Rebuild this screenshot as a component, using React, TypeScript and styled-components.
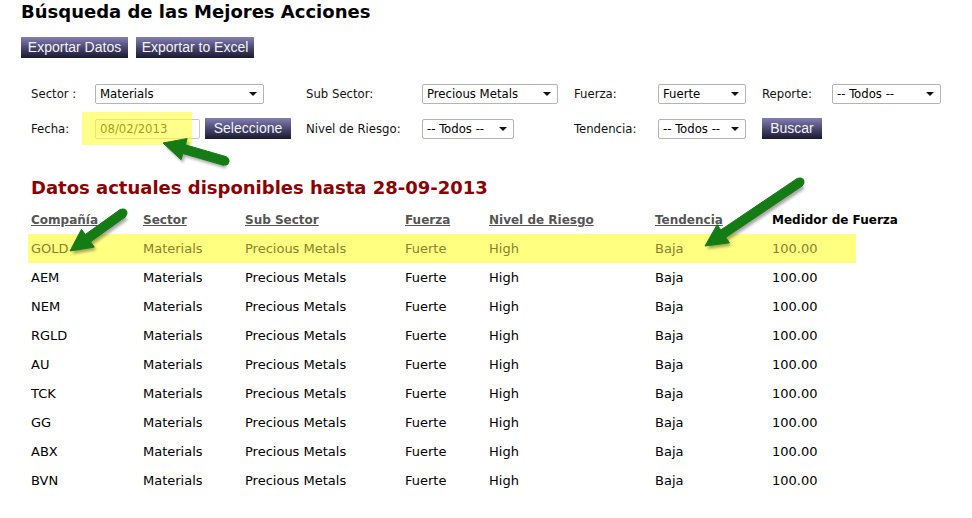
import styled, { createGlobalStyle } from "styled-components";

const GlobalStyle = createGlobalStyle`
  html, body {
    margin: 0;
    padding: 0;
    background: #fff;
  }
  body {
    font-family: "DejaVu Sans", Verdana, sans-serif;
    color: #000;
  }
`;

const Page = styled.div`
  position: relative;
  width: 972px;
  height: 518px;
  overflow: hidden;
`;

const Title = styled.h1`
  margin: 0;
  padding: 0 0 0 21px;
  font-family: "DejaVu Sans", Verdana, sans-serif;
  font-size: 18px;
  font-weight: bold;
  line-height: 24px;
  color: #000;
`;

const ButtonBar = styled.div`
  display: flex;
  gap: 8px;
  padding-left: 21px;
  margin-top: 13px;
`;

const Btn = styled.button<{ $w?: number }>`
  height: 21px;
  width: ${(p) => (p.$w ? `${p.$w}px` : "auto")};
  padding: 0;
  border: 0 none;
  background: linear-gradient(#847fb4, #46436b 55%, #1a1930);
  color: #f4f4f8;
  font-family: "Liberation Sans", Arial, sans-serif;
  font-size: 14px;
  line-height: 21px;
  text-align: center;
  cursor: pointer;
`;

const FilterGrid = styled.div`
  display: grid;
  grid-template-columns: 64px 211px 116px 152px 84px 104px 70px 120px;
  grid-auto-rows: 21px;
  row-gap: 14px;
  align-items: center;
  margin-top: 25px;
  padding-left: 31px;
  font-family: "DejaVu Sans Condensed", Tahoma, sans-serif;
  font-size: 13px;
`;

const Label = styled.span`
  color: #111;
  white-space: nowrap;
`;

const SelectBox = styled.div<{ $w: number }>`
  position: relative;
  box-sizing: border-box;
  width: ${(p) => p.$w}px;
  height: 20px;
  border: 1px solid #b4b4b4;
  border-radius: 2px;
  background: #fff;
  padding-left: 4px;
  line-height: 18px;
  white-space: nowrap;
  color: #000;
  display: flex;
  align-items: center;
  justify-content: space-between;
`;

const Caret = styled.span`
  width: 0;
  height: 0;
  margin-right: 6px;
  border-left: 4px solid transparent;
  border-right: 4px solid transparent;
  border-top: 4px solid #111;
`;

const DateCell = styled.div`
  display: flex;
  align-items: center;
  gap: 5px;
`;

const DateMark = styled.div`
  position: relative;
  &::after {
    content: "";
    position: absolute;
    left: -13px;
    top: -7px;
    width: 110px;
    height: 33px;
    background: rgba(255, 255, 40, 0.55);
    pointer-events: none;
  }
`;

const DateInput = styled.div`
  box-sizing: border-box;
  width: 105px;
  height: 20px;
  border: 1px solid #c8c8c8;
  border-radius: 2px;
  padding-left: 4px;
  line-height: 18px;
  color: #2a2810;
`;

const SubTitle = styled.h2`
  margin: 38px 0 0;
  padding-left: 31px;
  font-family: "DejaVu Sans", Verdana, sans-serif;
  font-size: 18px;
  font-weight: bold;
  line-height: 22px;
  color: #8b0000;
`;

const Table = styled.table`
  width: 828px;
  margin: 6px 0 0 28px;
  border-collapse: collapse;
  font-family: "DejaVu Sans", Verdana, sans-serif;
  font-size: 13px;
  table-layout: fixed;
`;

const Th = styled.th<{ $plain?: boolean }>`
  height: 29px;
  padding: 0 0 0 3px;
  text-align: left;
  font-weight: bold;
  font-size: 12px;
  color: ${(p) => (p.$plain ? "#000" : "#555")};
  text-decoration: ${(p) => (p.$plain ? "none" : "underline")};
  white-space: nowrap;
  overflow: visible;
`;

const Tr = styled.tr<{ $hi?: boolean }>`
  background: ${(p) => (p.$hi ? "#ffff80" : "transparent")};
  color: ${(p) => (p.$hi ? "#868230" : "#000")};
`;

const Td = styled.td`
  height: 29px;
  padding: 0 0 0 3px;
  white-space: nowrap;
`;

const Overlay = styled.svg`
  position: absolute;
  left: 0;
  top: 0;
  pointer-events: none;
`;

const cols = [112, 102, 160, 84, 166, 117, 87];
const headers = ["Compañía", "Sector", "Sub Sector", "Fuerza", "Nivel de Riesgo", "Tendencia"];
const tickers = ["GOLD", "AEM", "NEM", "RGLD", "AU", "TCK", "GG", "ABX", "BVN"];

function Select({ w, value }: { w: number; value: string }) {
  return (
    <SelectBox $w={w}>
      <span>{value}</span>
      <Caret />
    </SelectBox>
  );
}

function Arrow({ x1, y1, x2, y2 }: { x1: number; y1: number; x2: number; y2: number }) {
  const dx = x2 - x1;
  const dy = y2 - y1;
  const len = Math.hypot(dx, dy);
  const ux = dx / len;
  const uy = dy / len;
  const nx = -uy;
  const ny = ux;
  const head = 22;
  const hw = 11;
  const sw = 4.5;
  const bx = x2 - ux * head;
  const by = y2 - uy * head;
  const pts = [
    [x1 + nx * sw, y1 + ny * sw],
    [bx + nx * sw, by + ny * sw],
    [bx + nx * hw, by + ny * hw],
    [x2, y2],
    [bx - nx * hw, by - ny * hw],
    [bx - nx * sw, by - ny * sw],
    [x1 - nx * sw, y1 - ny * sw],
  ]
    .map((p) => p.join(","))
    .join(" ");
  return (
    <g>
      <polygon points={pts} fill="#000" opacity="0.35" transform="translate(2,3)" filter="url(#blur)" />
      <circle cx={x1} cy={y1} r={sw} fill="#157c15" />
      <polygon points={pts} fill="#157c15" stroke="#157c15" strokeWidth="1" strokeLinejoin="round" />
    </g>
  );
}

function App() {
  return (
    <Page>
      <GlobalStyle />
      <Title>Búsqueda de las Mejores Acciones</Title>
      <ButtonBar>
        <Btn $w={107}>Exportar Datos</Btn>
        <Btn $w={118}>Exportar to Excel</Btn>
      </ButtonBar>

      <FilterGrid>
        <Label>Sector :</Label>
        <Select w={169} value="Materials" />
        <Label>Sub Sector:</Label>
        <Select w={136} value="Precious Metals" />
        <Label>Fuerza:</Label>
        <Select w={88} value="Fuerte" />
        <Label>Reporte:</Label>
        <Select w={109} value="-- Todos --" />

        <Label>Fecha:</Label>
        <DateCell>
          <DateMark>
            <DateInput>08/02/2013</DateInput>
          </DateMark>
          <Btn $w={86}>Seleccione</Btn>
        </DateCell>
        <Label>Nivel de Riesgo:</Label>
        <Select w={92} value="-- Todos --" />
        <Label>Tendencia:</Label>
        <Select w={88} value="-- Todos --" />
        <div>
          <Btn $w={60}>Buscar</Btn>
        </div>
        <span />
      </FilterGrid>

      <SubTitle>Datos actuales disponibles hasta 28-09-2013</SubTitle>

      <Table>
        <colgroup>
          {cols.map((w, i) => (
            <col key={i} style={{ width: w }} />
          ))}
        </colgroup>
        <thead>
          <tr>
            {headers.map((h) => (
              <Th key={h}>{h}</Th>
            ))}
            <Th $plain>Medidor de Fuerza</Th>
          </tr>
        </thead>
        <tbody>
          {tickers.map((t, i) => (
            <Tr key={t} $hi={i === 0}>
              <Td>{t}</Td>
              <Td>Materials</Td>
              <Td>Precious Metals</Td>
              <Td>Fuerte</Td>
              <Td>High</Td>
              <Td>Baja</Td>
              <Td>100.00</Td>
            </Tr>
          ))}
        </tbody>
      </Table>

      <Overlay width="972" height="518" viewBox="0 0 972 518">
        <defs>
          <filter id="blur" x="-20%" y="-20%" width="140%" height="140%">
            <feGaussianBlur stdDeviation="1.5" />
          </filter>
        </defs>
        <Arrow x1={225} y1={161} x2={163} y2={143} />
        <Arrow x1={123} y1={213} x2={70} y2={251} />
        <Arrow x1={800} y1={182} x2={705} y2={246} />
      </Overlay>
    </Page>
  );
}

export default App;
